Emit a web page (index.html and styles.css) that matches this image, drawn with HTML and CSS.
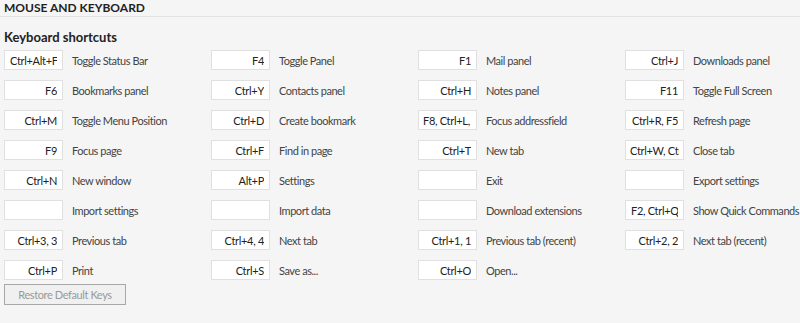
FILE: index.html
```html
<!DOCTYPE html>
<html lang="en">
<head>
    <meta charset="UTF-8">
    <title>Mouse and Keyboard</title>
    <link rel="stylesheet" href="styles.css">
</head>
<body>
    <div class="page">
        <h2 class="page-title">MOUSE AND KEYBOARD</h2>
        <div class="section">
            <h3>Keyboard shortcuts</h3>
            <div class="shortcuts">
                <div class="shortcut"><input class="key" value="Ctrl+Alt+F"><span>Toggle Status Bar</span></div>
                <div class="shortcut"><input class="key" value="F4"><span>Toggle Panel</span></div>
                <div class="shortcut"><input class="key" value="F1"><span>Mail panel</span></div>
                <div class="shortcut"><input class="key" value="Ctrl+J"><span>Downloads panel</span></div>

                <div class="shortcut"><input class="key" value="F6"><span>Bookmarks panel</span></div>
                <div class="shortcut"><input class="key" value="Ctrl+Y"><span>Contacts panel</span></div>
                <div class="shortcut"><input class="key" value="Ctrl+H"><span>Notes panel</span></div>
                <div class="shortcut"><input class="key" value="F11"><span>Toggle Full Screen</span></div>

                <div class="shortcut"><input class="key" value="Ctrl+M"><span>Toggle Menu Position</span></div>
                <div class="shortcut"><input class="key" value="Ctrl+D"><span>Create bookmark</span></div>
                <div class="shortcut"><input class="key overflow" value="F8, Ctrl+L, Alt+D"><span>Focus addressfield</span></div>
                <div class="shortcut"><input class="key" value="Ctrl+R, F5"><span>Refresh page</span></div>

                <div class="shortcut"><input class="key" value="F9"><span>Focus page</span></div>
                <div class="shortcut"><input class="key" value="Ctrl+F"><span>Find in page</span></div>
                <div class="shortcut"><input class="key" value="Ctrl+T"><span>New tab</span></div>
                <div class="shortcut"><input class="key overflow" value="Ctrl+W, Ctrl+F4"><span>Close tab</span></div>

                <div class="shortcut"><input class="key" value="Ctrl+N"><span>New window</span></div>
                <div class="shortcut"><input class="key" value="Alt+P"><span>Settings</span></div>
                <div class="shortcut"><input class="key" value=""><span>Exit</span></div>
                <div class="shortcut"><input class="key" value=""><span>Export settings</span></div>

                <div class="shortcut"><input class="key" value=""><span>Import settings</span></div>
                <div class="shortcut"><input class="key" value=""><span>Import data</span></div>
                <div class="shortcut"><input class="key" value=""><span>Download extensions</span></div>
                <div class="shortcut"><input class="key" value="F2, Ctrl+Q"><span>Show Quick Commands</span></div>

                <div class="shortcut"><input class="key" value="Ctrl+3, 3"><span>Previous tab</span></div>
                <div class="shortcut"><input class="key" value="Ctrl+4, 4"><span>Next tab</span></div>
                <div class="shortcut"><input class="key" value="Ctrl+1, 1"><span>Previous tab (recent)</span></div>
                <div class="shortcut"><input class="key" value="Ctrl+2, 2"><span>Next tab (recent)</span></div>

                <div class="shortcut"><input class="key" value="Ctrl+P"><span>Print</span></div>
                <div class="shortcut"><input class="key" value="Ctrl+S"><span>Save as...</span></div>
                <div class="shortcut"><input class="key" value="Ctrl+O"><span>Open...</span></div>
            </div>
            <button class="restore" disabled>Restore Default Keys</button>
        </div>
    </div>
</body>
</html>
```

FILE: styles.css
```css
body {
    margin: 0;
    background-color: #f5f5f5;
    font-family: Lato, "Liberation Sans", sans-serif;
    font-size: 11px;
    letter-spacing: -0.45px;
    color: #333;
}
.page {
    padding: 0 4px;
}
.page-title {
    margin: 0 -4px;
    padding: 1px 4px 0;
    height: 15px;
    font-size: 12px;
    font-weight: bold;
    letter-spacing: 0;
    color: #222;
    border-bottom: 1px solid #e2e2e2;
    line-height: 14px;
}
.section h3 {
    margin: 0;
    padding-top: 12px;
    font-size: 13px;
    font-weight: bold;
    letter-spacing: 0;
    color: #222;
    line-height: 16px;
}
.shortcuts {
    display: grid;
    grid-template-columns: repeat(4, 207px);
    row-gap: 10px;
    margin-top: 5px;
}
.shortcut {
    display: flex;
    align-items: center;
    gap: 9px;
    height: 20px;
}
.key {
    box-sizing: border-box;
    width: 59px;
    height: 20px;
    padding: 0 5px;
    border: 1px solid #e0e0e0;
    background-color: #fff;
    font-family: inherit;
    font-size: 11px;
    letter-spacing: -0.3px;
    color: #222;
    text-align: right;
    outline: none;
}
.key.overflow {
    text-align: left;
    padding: 0 4px;
}
.shortcut span {
    color: #444;
    white-space: nowrap;
}
.restore {
    margin-top: 4px;
    width: 122px;
    height: 21px;
    padding: 0;
    border: 1px solid #a8a8a8;
    background-color: #f0f0f0;
    font-family: inherit;
    font-size: 11px;
    letter-spacing: -0.4px;
    color: #999;
}
```
